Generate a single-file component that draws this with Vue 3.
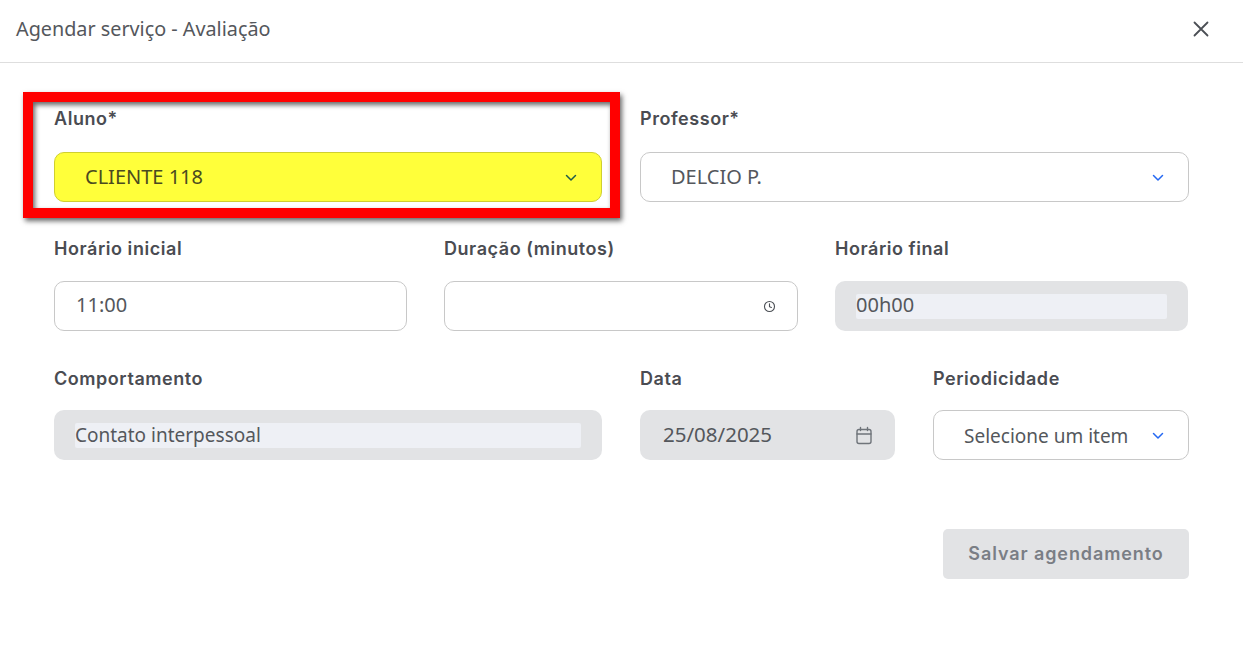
<script setup>
const r2 = [
  { label: 'Horário inicial', kind: 'plain', value: '11:00' },
  { label: 'Duração (minutos)', kind: 'clock', value: '' },
  { label: 'Horário final', kind: 'off', value: '00h00' }
]
</script>

<template>
  <div class="modal">
    <header class="head">
      <h1>Agendar serviço - Avaliação</h1>
      <svg class="close" width="18" height="18" viewBox="0 0 18 18" fill="none" stroke="#4b4f55" stroke-width="1.8" stroke-linecap="round">
        <path d="M2.5 2.5l13 13M15.5 2.5l-13 13" />
      </svg>
    </header>

    <main class="body">
      <section class="row two">
        <div class="field">
          <label>Aluno*</label>
          <div class="box select yellow">
            <span class="up">CLIENTE 118</span>
            <svg class="chev" width="12" height="8" viewBox="0 0 12 8" fill="none" stroke="#1f5a4a" stroke-width="1.5" stroke-linecap="round" stroke-linejoin="round"><path d="M1.5 1.5L6 6l4.5-4.5" /></svg>
          </div>
          <div class="marker"></div>
        </div>
        <div class="field">
          <label>Professor*</label>
          <div class="box select">
            <span class="up">DELCIO P.</span>
            <svg class="chev" width="12" height="8" viewBox="0 0 12 8" fill="none" stroke="#2468f2" stroke-width="1.5" stroke-linecap="round" stroke-linejoin="round"><path d="M1.5 1.5L6 6l4.5-4.5" /></svg>
          </div>
        </div>
      </section>

      <section class="row three">
        <div v-for="f in r2" :key="f.label" class="field">
          <label>{{ f.label }}</label>
          <div v-if="f.kind === 'plain'" class="box input"><span class="val">{{ f.value }}</span></div>
          <div v-else-if="f.kind === 'clock'" class="box input clock">
            <svg width="13" height="13" viewBox="0 0 14 14" fill="none" stroke="#4b4f55" stroke-width="1.2" stroke-linecap="round"><circle cx="7" cy="7" r="5.4" /><path d="M7 4v3.2l2 .9" /></svg>
          </div>
          <div v-else class="box off"><span class="inner val">{{ f.value }}</span></div>
        </div>
      </section>

      <section class="row mixed">
        <div class="field">
          <label>Comportamento</label>
          <div class="box off"><span class="inner lc">Contato interpessoal</span></div>
        </div>
        <div class="field">
          <label>Data</label>
          <div class="box date">
            <span class="dt">25/08/2025</span>
            <svg width="18" height="19" viewBox="0 0 18 19" fill="none" stroke="#6f747a" stroke-width="1.4" stroke-linecap="round" stroke-linejoin="round"><rect x="2" y="3.5" width="14" height="14" rx="2" /><path d="M2 8h14M5.5 1.5v3M12.5 1.5v3" /></svg>
          </div>
        </div>
        <div class="field">
          <label>Periodicidade</label>
          <div class="box select small">
            <span class="lc down">Selecione um item</span>
            <svg class="chev" width="12" height="8" viewBox="0 0 12 8" fill="none" stroke="#2468f2" stroke-width="1.5" stroke-linecap="round" stroke-linejoin="round"><path d="M1.5 1.5L6 6l4.5-4.5" /></svg>
          </div>
        </div>
      </section>

      <footer class="actions">
        <button type="button">Salvar agendamento</button>
      </footer>
    </main>
  </div>
</template>

<style>
html, body { background: #fff; }
</style>

<style scoped>
.modal { width: 1243px; height: 651px; background: #fff; overflow: hidden; font-family: "Noto Sans", sans-serif; color: #4b4f55; }
.head { height: 63px; display: flex; align-items: center; justify-content: space-between; padding: 0 33px 5px 16px; box-sizing: border-box; border-bottom: 1px solid #dedede; }
.close { margin-top: 1px; }
h1 { margin: 0; font: 400 19.8px "Noto Sans", sans-serif; color: #54575c; }
.body { padding: 43px 54px 0 54px; }
.row { display: grid; margin-bottom: 33px; }
.two { grid-template-columns: 548px 549px; column-gap: 38px; }
.three { grid-template-columns: 353px 354px 353px; column-gap: 37px; }
.mixed { grid-template-columns: 548px 255px 256px; column-gap: 38px; }
.field { position: relative; display: flex; flex-direction: column; }
label { height: 24px; margin-bottom: 22px; font: 600 18px/26px "Inter", sans-serif; letter-spacing: .55px; color: #4a4c52; white-space: nowrap; }
.three label { line-height: 28px; }
.mixed label { line-height: 30px; }
.box { height: 50px; box-sizing: border-box; border-radius: 10px; display: flex; align-items: center; font-size: 20px; color: #54575c; }
.select { border: 1px solid #c8c8c8; padding: 0 24px 0 30px; justify-content: space-between; }
.chev { margin-top: 2px; }
.up { margin-top: -2px; }
.val { margin-top: -3px; }
.yellow { background: #ffff3a; border-color: #cfcf30; color: #4a4a20; }
.input { border: 1px solid #c8c8c8; padding: 0 21px; }
.clock { justify-content: flex-end; padding-right: 21px; }
.off { background: #e2e3e5; padding: 0 21px; }
.inner { flex: 1; background: #eef0f5; height: 25px; line-height: 25px; border-radius: 2px; }
.inner.val { margin-top: 0; line-height: 22px; }
.lc { font-size: 19px; }
.down { margin-top: 2px; }
.date { background: #e2e3e5; padding: 0 22px 0 23px; justify-content: space-between; }
.dt { font-size: 20.5px; margin-top: -2px; }
.small { padding: 0 24px 0 30px; }
.marker { position: absolute; left: -31px; right: -18px; top: -14px; bottom: -16px; border: 10px solid #ff0000; box-shadow: 2px 3px 5px rgba(0, 0, 0, .6), inset 2px 3px 5px rgba(0, 0, 0, .6); pointer-events: none; }
.actions { display: flex; justify-content: flex-end; margin-top: 69px; }
button { width: 246px; height: 50px; padding: 0 0 2px; border: 0; border-radius: 5px; background: #e2e3e5; color: #7a7e85; font: 600 18px "Inter", sans-serif; letter-spacing: .9px; }
</style>
